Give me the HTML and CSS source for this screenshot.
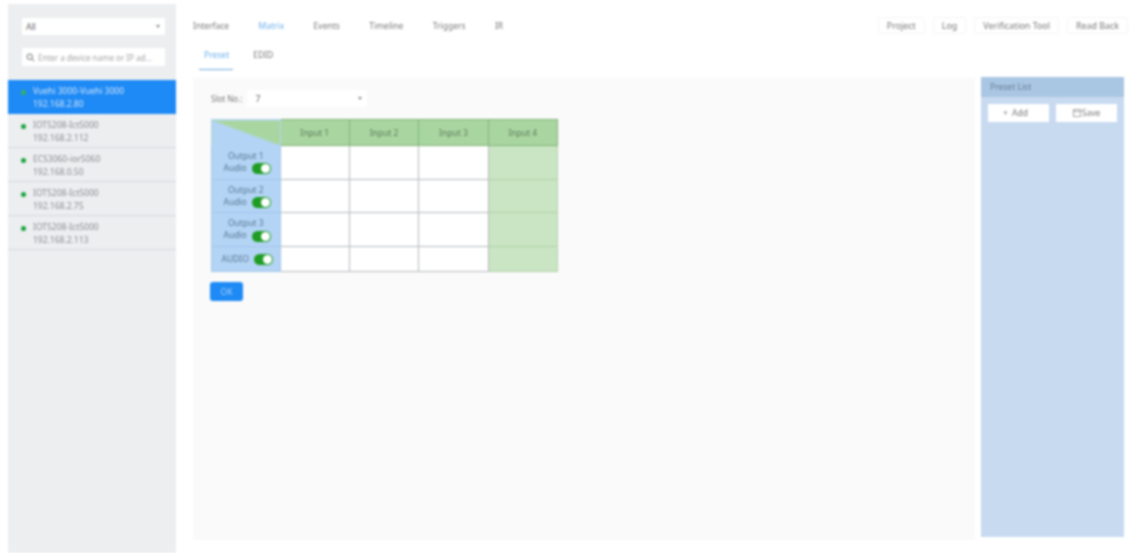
FILE: index.html
```html
<!DOCTYPE html>
<html lang="en">
<head>
  <meta charset="UTF-8" />
  <title>Matrix - Preset</title>
  <link rel="stylesheet" href="styles.css">
</head>
<body>

<div class="page">
  <aside class="sidebar">
    <div class="sidebar-filters">
      <div class="select">
        <span>All</span>
        <span class="caret"></span>
      </div>
      <div class="search">
        <svg class="search-icon" viewBox="0 0 12 12" width="9" height="9">
          <circle cx="5" cy="5" r="3.6" fill="none" stroke="#666" stroke-width="1.3"/>
          <path d="M8 8l3 3" stroke="#666" stroke-width="1.3"/>
        </svg>
        <span class="search-text">Enter a device name or IP ad...</span>
      </div>
    </div>

    <ul class="device-list">
      <li class="device device-active">
        <span class="dot"></span>
        <div>
          <div>Vuehi 3000-Vuehi 3000</div>
          <div>192.168.2.80</div>
        </div>
      </li>
      <li class="device">
        <span class="dot"></span>
        <div>
          <div>IOT5208-Ict5000</div>
          <div>192.168.2.112</div>
        </div>
      </li>
      <li class="device">
        <span class="dot"></span>
        <div>
          <div>ECS3060-ior5060</div>
          <div>192.168.0.50</div>
        </div>
      </li>
      <li class="device">
        <span class="dot"></span>
        <div>
          <div>IOT5208-Ict5000</div>
          <div>192.168.2.75</div>
        </div>
      </li>
      <li class="device">
        <span class="dot"></span>
        <div>
          <div>IOT5208-Ict5000</div>
          <div>192.168.2.113</div>
        </div>
      </li>
    </ul>
  </aside>

  <main class="main">
    <div class="topbar">
      <nav class="tabs">
        <a class="tab">Interface</a>
        <a class="tab tab-active">Matrix</a>
        <a class="tab">Events</a>
        <a class="tab">Timeline</a>
        <a class="tab">Triggers</a>
        <a class="tab">IR</a>
      </nav>
      <div class="actions">
        <button class="action">Project</button>
        <button class="action">Log</button>
        <button class="action">Verification Tool</button>
        <button class="action">Read Back</button>
      </div>
    </div>

    <div class="subtabs">
      <a class="subtab subtab-active">Preset</a>
      <a class="subtab">EDID</a>
    </div>

    <div class="workspace">
      <section class="panel">
        <div class="slot-row">
          <label class="slot-label">Slot No.:</label>
          <div class="select slot-select">
            <span>7</span>
            <span class="caret"></span>
          </div>
        </div>

        <table class="matrix">
          <tr class="row-head">
            <th class="corner"></th>
            <th>Input 1</th>
            <th>Input 2</th>
            <th>Input 3</th>
            <th>Input 4</th>
          </tr>
          <tr class="row-output">
            <td class="side">Output 1<br>Audio <span class="switch"></span></td>
            <td></td><td></td><td></td><td class="col-green"></td>
          </tr>
          <tr class="row-output">
            <td class="side">Output 2<br>Audio <span class="switch"></span></td>
            <td></td><td></td><td></td><td class="col-green"></td>
          </tr>
          <tr class="row-output">
            <td class="side">Output 3<br>Audio <span class="switch"></span></td>
            <td></td><td></td><td></td><td class="col-green"></td>
          </tr>
          <tr class="row-audio">
            <td class="side">AUDIO <span class="switch"></span></td>
            <td></td><td></td><td></td><td class="col-green"></td>
          </tr>
        </table>

        <button class="ok-button">OK</button>
      </section>

      <aside class="preset-list">
        <div class="preset-title">Preset List</div>
        <div class="preset-buttons">
          <button class="preset-button preset-add">+ Add</button>
          <button class="preset-button">
            <svg viewBox="0 0 10 10" width="8" height="8">
              <path d="M.5.5h9v9h-9zM.5 3h9" fill="none" stroke="#666" stroke-width=".8"/>
            </svg>Save
          </button>
        </div>
      </aside>
    </div>
  </main>
</div>

</body>
</html>
```

FILE: styles.css
```css
* {
  margin: 0; padding: 0; box-sizing: border-box;
}

body {
  font-family: 'Noto Sans', 'Liberation Sans', sans-serif;
  font-size: 8.5px;
  color: #777;
  background: #fff;
  overflow: hidden;
}

.page {
  display: flex;
  height: 553px;
  padding: 4px 13px 0 8px;
  filter: blur(0.8px);
}

.sidebar {
  width: 168px;
  background: #eceef0;
  flex-shrink: 0;
}

.sidebar-filters {
  padding: 14px 11px 14px 14px;
}

.select {
  display: flex;
  align-items: center;
  justify-content: space-between;
  height: 17px;
  padding: 0 5px 0 4px;
  background: #fff;
  color: #666;
}

.caret {
  width: 0;
  height: 0;
  border-left: 2.5px solid transparent;
  border-right: 2.5px solid transparent;
  border-top: 3px solid #888;
}

.search {
  display: flex;
  align-items: center;
  gap: 3px;
  height: 18px;
  margin-top: 13px;
  padding: 0 4px;
  background: #fff;
}

.search-text {
  color: #aaa;
  font-size: 8px;
  white-space: nowrap;
  overflow: hidden;
}

.device-list {
  list-style: none;
}

.device {
  display: flex;
  gap: 7px;
  height: 34px;
  padding: 5px 0 0 13px;
  border-bottom: 1px solid #d6d8db;
  line-height: 12.5px;
  color: #8a8d90;
}

.device-active {
  background: #1e8af5;
  border-bottom: none;
  color: #cfe4fa;
}

.dot {
  width: 5px;
  height: 5px;
  margin-top: 5px;
  border-radius: 50%;
  background: #17a33b;
  flex-shrink: 0;
}

.device-active .dot {
  background: #37b060;
}

.main {
  flex: 1;
  display: flex;
  flex-direction: column;
  min-width: 0;
  padding-left: 17px;
}

.topbar {
  display: flex;
  justify-content: space-between;
  align-items: center;
  height: 22px;
  margin-top: 10px;
  margin-right: -4px;
}

.tabs {
  display: flex;
  gap: 29.4px;
  font-size: 8.5px;
}

.tab-active,
.subtab-active {
  color: #6db0ec;
}

.actions {
  display: flex;
  gap: 8px;
}

.action {
  height: 17px;
  padding: 0 8px;
  border: 1px solid #f5f5f5;
  border-radius: 2px;
  background: #fff;
  color: #777;
  font: inherit;
  font-size: 8.9px;
}

.subtabs {
  display: flex;
  gap: 24px;
  height: 41px;
  padding: 13px 0 0 11px;
}

.subtab {
  height: 21px;
}

.subtab-active {
  position: relative;
}

.subtab-active::after {
  content: "";
  position: absolute;
  left: -5px;
  right: -4px;
  bottom: 0;
  height: 1px;
  background: #6aa7dc;
}

.workspace {
  flex: 1;
  display: flex;
  gap: 6px;
  padding-bottom: 13px;
}

.panel {
  width: 782px;
  margin-top: 1px;
  padding: 12px 18px;
  background: #fafafa;
}

.slot-row {
  display: flex;
  align-items: center;
  gap: 5px;
}

.slot-label {
  font-size: 8px;
}

.slot-select {
  width: 120px;
  padding-left: 8px;
}

.matrix {
  width: 347px;
  margin-top: 12px;
  border-collapse: collapse;
  table-layout: fixed;
  background: #fff;
}

.matrix th,
.matrix td {
  border: 1px solid #b4b8bb;
  text-align: center;
  font-weight: normal;
}

.matrix th {
  background: #a9d6a0;
  border-color: #7fb277;
  color: #5d7a5d;
}

.matrix .corner {
  width: 68.5px;
  background: linear-gradient(to top right, #b3d4f5 50%, #a9d6a0 50%);
  border-color: #b3d4f5;
}

.row-head {
  height: 26px;
}

.row-output {
  height: 33.6px;
}

.row-audio {
  height: 25px;
}

.matrix .side {
  background: #b3d4f5;
  border-color: #a3c6e8;
  line-height: 12px;
  color: #5b7793;
}

.matrix .col-green {
  background: #c9e5c3;
  border-color: #b3d3ad;
}

.switch {
  display: inline-block;
  position: relative;
  width: 19px;
  height: 11px;
  margin-left: 3px;
  margin-right: -3px;
  vertical-align: middle;
  border-radius: 6px;
  background: #1f9c22;
}

.switch::after {
  content: "";
  position: absolute;
  right: 1px;
  top: 1px;
  width: 9px;
  height: 9px;
  border-radius: 50%;
  background: #fff;
}

.ok-button {
  display: block;
  width: 33px;
  height: 19px;
  margin-top: 10px;
  margin-left: -1px;
  border: none;
  border-radius: 3px;
  background: #1e8af5;
  color: #a9d0f7;
  font: inherit;
}

.preset-list {
  width: 143px;
  margin-bottom: 3px;
  background: #c8daf0;
}

.preset-title {
  height: 20px;
  padding-left: 9px;
  line-height: 20px;
  background: #a9c6e3;
  color: #6a7f94;
}

.preset-buttons {
  display: flex;
  justify-content: space-between;
  padding: 7px 7px;
}

.preset-button {
  display: flex;
  align-items: center;
  justify-content: center;
  gap: 1px;
  width: 61px;
  height: 18px;
  padding-bottom: 1px;
  border: none;
  background: #fff;
  color: #777;
  font: inherit;
}

.preset-add {
  padding-right: 6px;
  word-spacing: 2px;
}
```
